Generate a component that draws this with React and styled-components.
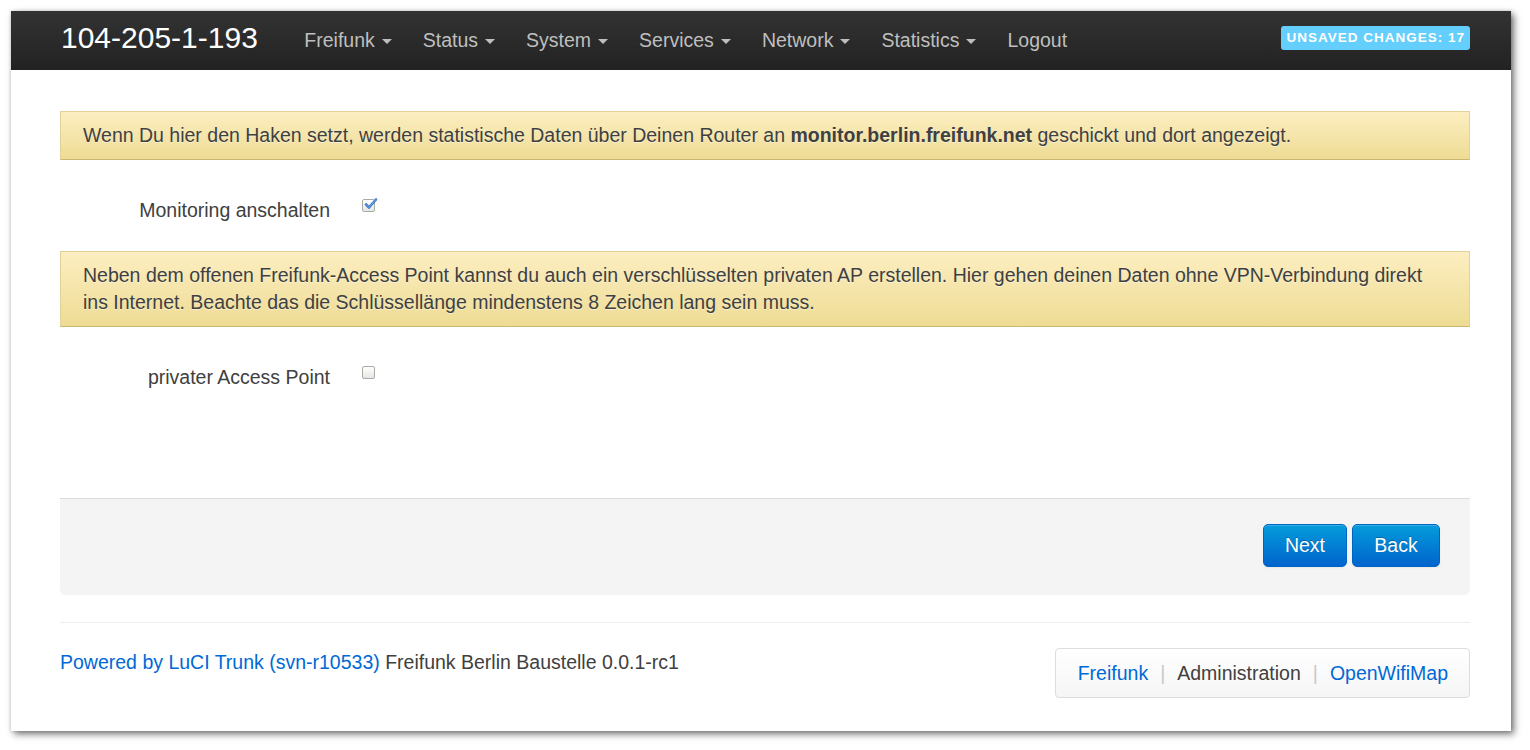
import React from "react";
import styled, { createGlobalStyle } from "styled-components";

const Global = createGlobalStyle`
  html, body { margin: 0; padding: 0; background: #fff; }
  body { font-family: "Liberation Sans", Arial, sans-serif; color: #404040; }
  * { box-sizing: border-box; }
`;

const Page = styled.div`
  padding: 11px 0 0 11px;
  width: 1530px;
  height: 750px;
`;

const Window = styled.div`
  width: 1500px;
  height: 720px;
  background: #fff;
  box-shadow: 3px 3px 7px rgba(0, 0, 0, 0.55), 0 0 3px rgba(0, 0, 0, 0.15);
  display: flex;
  flex-direction: column;
`;

const NavBar = styled.div`
  height: 59px;
  background: linear-gradient(to bottom, #333333, #222222);
  display: flex;
  align-items: center;
  padding: 0 41px 0 50px;
`;

const Brand = styled.div`
  color: #ffffff;
  font-size: 30px;
  margin-right: 31px;
  margin-top: -5px;
`;

const NavList = styled.div`
  display: flex;
  align-items: center;
  flex: 1;
`;

const NavItem = styled.div`
  color: #bfbfbf;
  font-size: 19.5px;
  padding: 0 15.5px;
  display: flex;
  align-items: center;
`;

const Caret = styled.span`
  display: inline-block;
  width: 0;
  height: 0;
  border-left: 5.5px solid transparent;
  border-right: 5.5px solid transparent;
  border-top: 5px solid #bfbfbf;
  margin-left: 7px;
  margin-top: 2px;
`;

const Badge = styled.div`
  background: #64cefc;
  color: #fff;
  font-weight: bold;
  font-size: 13.5px;
  letter-spacing: 1px;
  padding: 0 5px;
  height: 24px;
  line-height: 24px;
  border-radius: 3px;
  margin-top: -6px;
`;

const Content = styled.div`
  padding: 41px 41px 0 49px;
  flex: 1;
  display: flex;
  flex-direction: column;
`;

const Alert = styled.div`
  background: linear-gradient(to bottom, #fceec1, #eedc94);
  border: 1px solid #e2d29a;
  border-bottom-color: #c9b670;
  padding: 10px 22px;
  font-size: 19.5px;
  line-height: 27px;
  color: #404040;
  text-shadow: 0 1px 0 rgba(255, 255, 255, 0.5);
`;

const Row = styled.div`
  display: flex;
  align-items: center;
  padding: 40px 0 31px;
  height: 91px;
`;

const Label = styled.div`
  width: 270px;
  text-align: right;
  font-size: 19.5px;
  line-height: 20px;
  color: #404040;
`;

const Box = styled.span`
  width: 13px;
  height: 13px;
  margin-left: 32px;
  border: 1px solid #a8ada4;
  border-radius: 2px;
  background: linear-gradient(to bottom, #ffffff, #e6e7e4);
  position: relative;
  display: inline-block;
  margin-top: ${(p) => p.$mt}px;
`;

const Check = styled.svg`
  position: absolute;
  left: 1px;
  top: -3px;
`;

const Actions = styled.div`
  margin-top: 80px;
  background: #f4f4f4;
  border-top: 1px solid #dcdcdc;
  border-radius: 0 0 6px 6px;
  height: 97px;
  display: flex;
  justify-content: flex-end;
  align-items: flex-start;
  padding: 25px 30px 0 0;
  gap: 5px;
`;

const Button = styled.button`
  font-family: "Liberation Sans", Arial, sans-serif;
  font-size: 19.5px;
  color: #fff;
  height: 43px;
  width: ${(p) => p.$w}px;
  border-radius: 5px;
  border: 1px solid #0063c6;
  background: linear-gradient(to bottom, #049cdb, #0064cd);
  box-shadow: inset 0 1px 0 rgba(255, 255, 255, 0.2), 0 1px 2px rgba(0, 0, 0, 0.05);
  text-shadow: 0 -1px 0 rgba(0, 0, 0, 0.25);
  padding: 0;
`;

const Divider = styled.div`
  margin-top: 27px;
  border-top: 1px solid #eeeeee;
`;

const Footer = styled.div`
  display: flex;
  justify-content: space-between;
  align-items: flex-start;
  padding-top: 25px;
`;

const FooterText = styled.div`
  font-size: 19.5px;
  line-height: 20px;
  padding-top: 4px;
  color: #404040;
`;

const Link = styled.a`
  color: #0069d6;
  text-decoration: none;
`;

const Breadcrumb = styled.div`
  background: linear-gradient(to bottom, #ffffff, #f5f5f5);
  border: 1px solid #dddddd;
  border-radius: 4px;
  height: 50px;
  display: flex;
  align-items: center;
  padding: 0 21px 0 22px;
  font-size: 19.5px;
  box-shadow: inset 0 1px 0 #fff;
`;

const Sep = styled.span`
  color: #c8c8c8;
  padding: 0 12px;
`;

const navItems = ["Freifunk", "Status", "System", "Services", "Network", "Statistics"];

export default function App() {
  return (
    <>
      <Global />
      <Page>
        <Window>
          <NavBar>
            <Brand>104-205-1-193</Brand>
            <NavList>
              {navItems.map((n) => (
                <NavItem key={n}>
                  {n}
                  <Caret />
                </NavItem>
              ))}
              <NavItem>Logout</NavItem>
            </NavList>
            <Badge>UNSAVED CHANGES: 17</Badge>
          </NavBar>
          <Content>
            <Alert>
              Wenn Du hier den Haken setzt, werden statistische Daten über Deinen Router an{" "}
              <b>monitor.berlin.freifunk.net</b> geschickt und dort angezeigt.
            </Alert>
            <Row>
              <Label>Monitoring anschalten</Label>
              <Box $mt={-10}>
                <Check width="14" height="14" viewBox="0 0 14 14">
                  <path
                    d="M2 7.5 L5 10.5 L12 2.5"
                    fill="none"
                    stroke="#3b78c9"
                    strokeWidth="2.6"
                    strokeLinecap="round"
                    strokeLinejoin="round"
                  />
                  <path
                    d="M2 7.5 L5 10.5 L12 2.5"
                    fill="none"
                    stroke="#7fb0ea"
                    strokeWidth="0.8"
                    strokeLinecap="round"
                    strokeLinejoin="round"
                  />
                </Check>
              </Box>
            </Row>
            <Alert>
              Neben dem offenen Freifunk-Access Point kannst du auch ein verschlüsselten privaten AP
              erstellen. Hier gehen deinen Daten ohne VPN-Verbindung direkt ins Internet. Beachte das
              die Schlüssellänge mindenstens 8 Zeichen lang sein muss.
            </Alert>
            <Row>
              <Label>privater Access Point</Label>
              <Box $mt={-10} />
            </Row>
            <Actions>
              <Button $w={84}>Next</Button>
              <Button $w={88}>Back</Button>
            </Actions>
            <Divider />
            <Footer>
              <FooterText>
                <Link>Powered by LuCI Trunk (svn-r10533)</Link> Freifunk Berlin Baustelle 0.0.1-rc1
              </FooterText>
              <Breadcrumb>
                <Link>Freifunk</Link>
                <Sep>|</Sep>
                <span>Administration</span>
                <Sep>|</Sep>
                <Link>OpenWifiMap</Link>
              </Breadcrumb>
            </Footer>
          </Content>
        </Window>
      </Page>
    </>
  );
}
